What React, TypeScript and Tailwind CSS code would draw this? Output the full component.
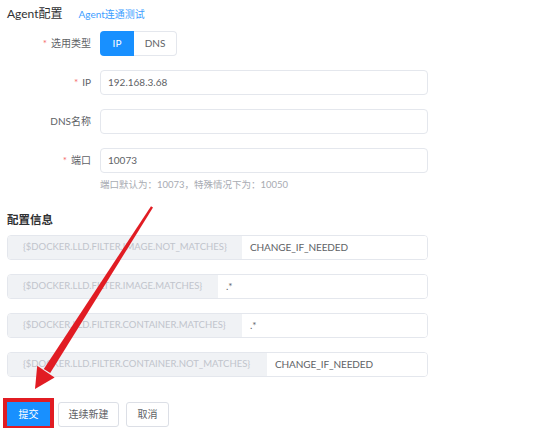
import React from "react";

const font = { fontFamily: 'Lato, "Noto Sans CJK SC", sans-serif' };

const configItems = [
  { key: "{$DOCKER.LLD.FILTER.IMAGE.NOT_MATCHES}", value: "CHANGE_IF_NEEDED", w: "w-[234px]" },
  { key: "{$DOCKER.LLD.FILTER.IMAGE.MATCHES}", value: ".*", w: "w-[210px]" },
  { key: "{$DOCKER.LLD.FILTER.CONTAINER.MATCHES}", value: ".*", w: "w-[234px]" },
  { key: "{$DOCKER.LLD.FILTER.CONTAINER.NOT_MATCHES}", value: "CHANGE_IF_NEEDED", w: "w-[259px]" },
];

function FormRow({
  label,
  required,
  children,
}: {
  label: string;
  required?: boolean;
  children: React.ReactNode;
}) {
  return (
    <div className="flex items-start">
      <div className="w-[93px] h-[25px] flex items-center justify-end pr-[9px] text-[10px] text-[#606266]">
        {required && <span className="text-[#f56c6c] mr-[4px]">*</span>}
        {label}
      </div>
      <div className="w-[328px]">{children}</div>
    </div>
  );
}

function TextInput({ value }: { value?: string }) {
  return (
    <div className="h-[25px] border border-[#e4e7ed] rounded-[4px] flex items-center px-[7px] text-[10px] text-[#606266] bg-white">
      {value}
    </div>
  );
}

export default function App() {
  return (
    <div className="relative w-[550px] h-[428px] bg-white overflow-hidden" style={font}>
      <div className="pl-[7px] pt-[5px]">
        <div className="flex items-center h-[18px]">
          <span className="text-[12px] text-[#303133]">Agent配置</span>
          <span className="ml-[16px] text-[10px] text-[#409eff]">Agent连通测试</span>
        </div>

        <div className="mt-[8px] flex flex-col gap-[14px]">
          <FormRow label="选用类型" required>
            <div className="flex h-[25px] w-[77px] text-[10px]">
              <div className="w-[34px] flex items-center justify-center bg-[#1890ff] text-white rounded-l-[4px]">
                IP
              </div>
              <div className="flex-1 flex items-center justify-center border border-l-0 border-[#e4e7ed] rounded-r-[4px] text-[#606266]">
                DNS
              </div>
            </div>
          </FormRow>
          <FormRow label="IP" required>
            <TextInput value="192.168.3.68" />
          </FormRow>
          <FormRow label="DNS名称">
            <TextInput />
          </FormRow>
          <FormRow label="端口" required>
            <TextInput value="10073" />
            <div className="mt-[5px] text-[9.5px] text-[#a8abb2] leading-[14px]">
              端口默认为：10073，特殊情况下为：10050
            </div>
          </FormRow>
        </div>

        <div className="mt-[20px] text-[11.5px] font-bold text-[#303133] leading-[16px]">配置信息</div>

        <div className="mt-[7px] flex flex-col gap-[14px] w-[421px]">
          {configItems.map((item) => (
            <div
              key={item.key}
              className="flex h-[25px] border border-[#e4e7ed] rounded-[4px] overflow-hidden text-[10px]"
            >
              <div
                className={`${item.w} bg-[#f0f2f5] flex items-center pl-[15px] text-[#c0c4cc] text-[9.5px] whitespace-nowrap`}
              >
                {item.key}
              </div>
              <div className="flex-1 flex items-center pl-[8px] text-[#606266] bg-white tracking-[-0.1px]">
                {item.value}
              </div>
            </div>
          ))}
        </div>

        <div className="mt-[21px] flex items-center">
          <div className="border-[4px] border-[#e11c23] -ml-[4px]">
            <div className="w-[43px] h-[24px] bg-[#1890ff] text-white text-[10px] flex items-center justify-center">
              提交
            </div>
          </div>
          <div className="ml-[4px] w-[61px] h-[25px] border border-[#dcdfe6] rounded-[3px] text-[10px] text-[#606266] flex items-center justify-center">
            连续新建
          </div>
          <div className="ml-[7px] w-[43px] h-[25px] border border-[#dcdfe6] rounded-[3px] text-[10px] text-[#606266] flex items-center justify-center">
            取消
          </div>
        </div>
      </div>

      {/* red arrow drawn over the form, pointing at the submit button */}
      <svg className="absolute left-0 top-0 pointer-events-none" width="550" height="428">
        <polygon points="153,207.5 151,206.2 43.8,368.9 50.2,373.1" fill="#e11c23" />
        <polygon points="35,389 37.2,365.8 54.6,377.6" fill="#e11c23" />
      </svg>
    </div>
  );
}
